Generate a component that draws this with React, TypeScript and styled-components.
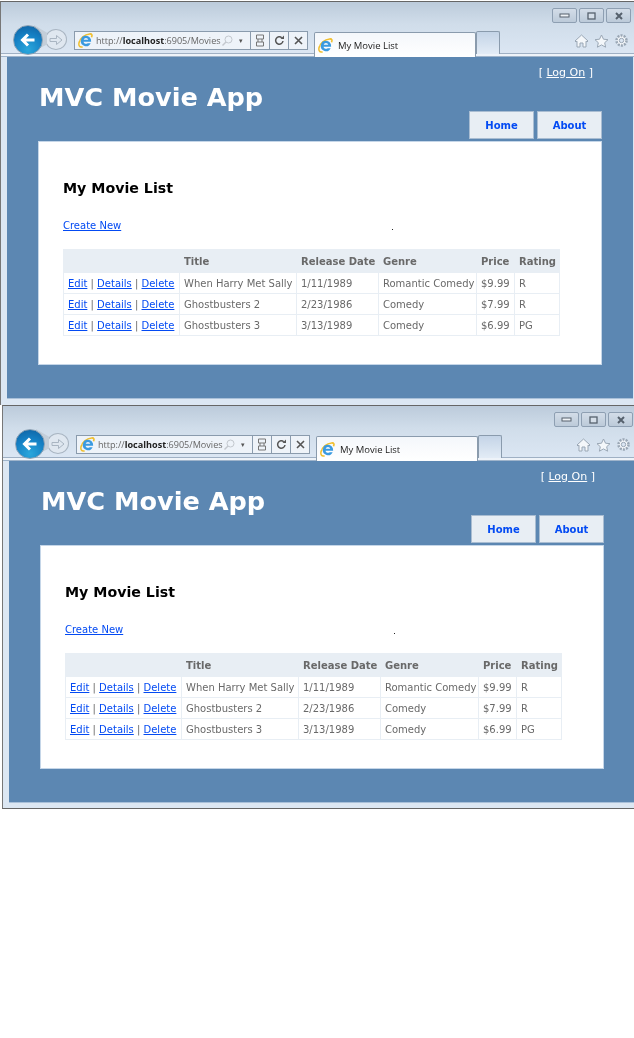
import React from "react";
import styled, { createGlobalStyle } from "styled-components";

const GlobalStyle = createGlobalStyle`
  html, body {
    margin: 0;
    padding: 0;
    background: #fff;
  }
  #root {
    width: 634px;
    height: 1038px;
    overflow: hidden;
  }
`;

const Stack = styled.div`
  display: flex;
  flex-direction: column;
  padding-top: 1px;
`;

const BrowserWindow = styled.div<{ $shift: number }>`
  width: 650px;
  height: 404px;
  margin-left: ${({ $shift }) => $shift}px;
  box-sizing: border-box;
  border-top: 1px solid #666;
  border-left: 1px solid #777;
  background: #dce7f3;
  padding-left: 6px;
  display: flex;
  flex-direction: column;
  overflow: hidden;
  filter: blur(0.4px);

  &:last-child {
    border-bottom: 1px solid #666;
  }
`;

const Chrome = styled.div`
  height: 55px;
  flex: none;
  margin-left: -6px;
  padding-left: 12px;
  background: linear-gradient(
    #bccbdb 0,
    #d0ddea 22px,
    #dbe6f3 51px,
    #9fb0c4 51px,
    #9fb0c4 52px,
    #eef3f9 52px
  );
  border-bottom: 1px solid #9fb4cb;
  box-sizing: border-box;
  display: flex;
  flex-direction: column;
`;

const TitleBar = styled.div`
  height: 21px;
  margin-bottom: 2px;
  flex: none;
  width: 618px;
  display: flex;
  justify-content: flex-end;
  align-items: flex-end;
  gap: 2px;
`;

const WinBtn = styled.div`
  width: 25px;
  height: 15px;
  box-sizing: border-box;
  border: 1px solid #8e9fb2;
  border-radius: 2px;
  background: linear-gradient(#d3dde8, #bccad9);
  display: flex;
  align-items: center;
  justify-content: center;
`;

const NavBar = styled.div`
  display: flex;
  align-items: flex-end;
  height: 31px;
`;

const BackBtn = styled.div`
  width: 30px;
  height: 30px;
  border-radius: 50%;
  background: radial-gradient(circle at 50% 85%, #2aa7dc 0, #1580c4 55%, #0f5f9f 100%);
  border: 1px solid #8da2b5;
  box-sizing: border-box;
  display: flex;
  align-items: center;
  justify-content: center;
  flex: none;
  margin-right: 2px;
  margin-bottom: 1px;
  position: relative;
  z-index: 1;
`;

const ForwardBtn = styled.div`
  width: 22px;
  height: 21px;
  border-radius: 50%;
  border: 1px solid #a9b5c2;
  box-sizing: border-box;
  background: #dfe7f0;
  display: flex;
  align-items: center;
  justify-content: center;
  flex: none;
  margin-bottom: 6px;
  margin-right: 7px;
  position: relative;

  &::before {
    content: "";
    position: absolute;
    left: -12px;
    top: -5px;
    width: 13px;
    height: 26px;
    background: #c3ced9;
    clip-path: polygon(0 0, 100% 30%, 100% 75%, 0 100%);
    z-index: 0;
  }
`;

const AddressBar = styled.div`
  width: 234px;
  height: 19px;
  margin-bottom: 6px;
  box-sizing: border-box;
  border: 1px solid #8a9bad;
  background: #eef3f9;
  display: flex;
  flex: none;
  align-items: center;
  padding-left: 3px;
`;

const UrlText = styled.div`
  font-family: "Open Sans", "Liberation Sans", sans-serif;
  font-size: 9.1px;
  color: #666;
  margin-left: 3px;
  width: 124px;
  white-space: nowrap;
  flex: none;

  b {
    color: #222;
  }
`;

const BarGap = styled.div`
  flex: 1;
  display: flex;
  align-items: center;
  padding-left: 1px;
  gap: 6px;
  color: #555;
  font-size: 7px;
  font-family: "DejaVu Sans", sans-serif;
`;

const BarBtn = styled.div`
  width: 19px;
  height: 17px;
  box-sizing: border-box;
  border-left: 1px solid #8a9bad;
  display: flex;
  align-items: center;
  justify-content: center;
  flex: none;
`;

const Tab = styled.div`
  width: 162px;
  height: 25px;
  margin-left: 6px;
  box-sizing: border-box;
  border: 1px solid #8a9bad;
  border-bottom: none;
  border-radius: 2px 2px 0 0;
  background: linear-gradient(#f4f7fb, #fff);
  display: flex;
  align-items: center;
  padding-left: 3px;
  flex: none;
  margin-bottom: -1px;
`;

const TabTitle = styled.span`
  font-family: "Open Sans", "Liberation Sans", sans-serif;
  font-size: 9.5px;
  color: #222;
  margin-left: 5px;
`;

const NewTab = styled.div`
  width: 24px;
  height: 23px;
  box-sizing: border-box;
  border: 1px solid #8a9bad;
  border-bottom: none;
  border-radius: 2px 2px 0 0;
  background: linear-gradient(#c4d4e7, #e3ecf6);
  flex: none;
  margin-bottom: 2px;
`;

const ToolIcons = styled.div`
  display: flex;
  gap: 5px;
  margin-left: 74px;
  margin-bottom: 8px;
  align-items: center;
`;

const Page = styled.div`
  width: 626px;
  height: 342px;
  flex: none;
  background: #5c87b2;
  border-bottom: 1px solid #a9c0d9;
  padding: 0 0 0 31px;
  box-sizing: border-box;
  display: flex;
  flex-direction: column;
`;

const PageWrap = styled.div`
  width: 564px;
  display: flex;
  flex-direction: column;
`;

const Header = styled.div`
  height: 84px;
  flex: none;
  position: relative;
  display: flex;
  justify-content: space-between;
`;

const AppTitle = styled.h1`
  margin: 25px 0 0 1px;
  font-family: "DejaVu Sans", sans-serif;
  font-size: 25.6px;
  line-height: 30px;
  font-weight: 700;
  color: #fff;
`;

const LogOn = styled.div`
  margin: 9px 9px 0 0;
  font-family: "DejaVu Sans", sans-serif;
  font-size: 11px;
  line-height: 14px;
  color: #fff;

  a {
    color: #fff;
    text-decoration: underline;
  }
`;

const Menu = styled.div`
  position: absolute;
  right: 0;
  bottom: 2px;
  display: flex;
  gap: 3px;
`;

const MenuItem = styled.a`
  width: 65px;
  height: 28px;
  box-sizing: border-box;
  background: #e8eef4;
  border: 1px solid #a9bdd2;
  color: #034af3;
  font-family: "DejaVu Sans", sans-serif;
  font-size: 10px;
  font-weight: 700;
  display: flex;
  align-items: center;
  justify-content: center;
`;

const Main = styled.div`
  background: #fff;
  border: 1px solid #c5d6e8;
  height: 224px;
  box-sizing: border-box;
  padding: 0 0 0 24px;
  font-family: "DejaVu Sans", sans-serif;
  position: relative;
`;

const Heading = styled.h2`
  margin: 37px 0 0 0;
  font-size: 14.2px;
  line-height: 18px;
  font-weight: 700;
  color: #000;
`;

const CreateLink = styled.a`
  display: block;
  margin-top: 22px;
  margin-bottom: 16px;
  font-size: 10px;
  line-height: 14px;
  color: #034af3;
  text-decoration: underline;
`;

const Speck = styled.div`
  position: absolute;
  left: 353px;
  top: 87px;
  width: 1px;
  height: 1px;
  background: #222;
`;

const Table = styled.table`
  border-collapse: collapse;
  table-layout: fixed;
  width: 496px;
  font-size: 10px;
  color: #696969;
  line-height: 14px;

  th {
    background: #e8eef4;
    border: 1px solid #e8eef4;
    padding: 1px 0 0 4px;
    height: 21px;
    text-align: left;
    font-weight: 700;
    white-space: nowrap;
  }

  td {
    border: 1px solid #e8eef4;
    padding: 1px 0 0 4px;
    height: 19px;
    white-space: nowrap;
  }

  a {
    color: #034af3;
    text-decoration: underline;
  }
`;

const Col = styled.col<{ $w: number }>`
  width: ${({ $w }) => $w}px;
`;

const colWidths = [116, 117, 82, 98, 38, 45];

const movies = [
  ["When Harry Met Sally", "1/11/1989", "Romantic Comedy", "$9.99", "R"],
  ["Ghostbusters 2", "2/23/1986", "Comedy", "$7.99", "R"],
  ["Ghostbusters 3", "3/13/1989", "Comedy", "$6.99", "PG"],
];

const IeLogo = () => (
  <svg width="15" height="15" viewBox="0 0 16 16">
    <path d="M1.500 10C2 5.500 7 1.500 12.500 1c2.500-.2 3 1.500 1.800 3.500" fill="none" stroke="#f0bf2e" strokeWidth="1.700" />
    <path d="M8.500 3a5.500 5.500 0 1 0 5 7.800h-3.200a2.600 2.600 0 0 1-4.400-1.600H14A5.500 5.500 0 0 0 8.500 3zM6 7.200a2.600 2.600 0 0 1 5 0z" fill="#3a9ae0" />
    <path d="M1.500 9c-1.500 4 0 6.800 3.500 5.800" fill="none" stroke="#f0bf2e" strokeWidth="1.600" />
  </svg>
);

const BackArrow = () => (
  <svg width="16" height="14" viewBox="0 0 16 14">
    <path d="M14.500 7H3M8 1.500 2.500 7 8 12.500" fill="none" stroke="#fff" strokeWidth="3" />
  </svg>
);

const ForwardArrow = () => (
  <svg width="14" height="12" viewBox="0 0 14 12">
    <path d="M1 4.500h6.500V1.500L13 6l-5.500 4.500v-3H1z" fill="none" stroke="#a9b5c2" strokeWidth="1" />
  </svg>
);

const Search = () => (
  <svg width="12" height="12" viewBox="0 0 12 12">
    <circle cx="7.500" cy="4.500" r="3.500" fill="none" stroke="#c3c8ce" strokeWidth="1" />
    <path d="M5 7 1.500 10.500" stroke="#c3c8ce" strokeWidth="1.500" />
  </svg>
);

const Compat = () => (
  <svg width="10" height="13" viewBox="0 0 10 13">
    <path d="M1.500 1h7v4h-7zM1.500 8h7v4h-7zM3 5v3M7 5v3" fill="none" stroke="#777" strokeWidth="1" />
  </svg>
);

const Refresh = () => (
  <svg width="11" height="11" viewBox="0 0 11 11">
    <path d="M9 6a3.700 3.700 0 1 1-1.200-3.300" fill="none" stroke="#555" strokeWidth="1.500" />
    <path d="M6.500 4H10V.5z" fill="#555" />
  </svg>
);

const Close = () => (
  <svg width="9" height="9" viewBox="0 0 9 9">
    <path d="M1 1l7 7M8 1 1 8" stroke="#555" strokeWidth="1.600" />
  </svg>
);

const Home = () => (
  <svg width="15" height="14" viewBox="0 0 15 14">
    <path d="M7.500 1 1 7l1 1 1-.8V13h3V9h3v4h3V7.200l1 .8 1-1z" fill="#f4f7fa" stroke="#9aa7b5" strokeWidth="1" />
  </svg>
);

const Star = () => (
  <svg width="15" height="14" viewBox="0 0 15 14">
    <path d="M7.500 1l2 4.200 4.500.5-3.300 3 .9 4.500-4.100-2.300-4.100 2.300.9-4.500-3.300-3 4.500-.5z" fill="#f4f7fa" stroke="#9aa7b5" strokeWidth="1" />
  </svg>
);

const Gear = () => (
  <svg width="15" height="15" viewBox="0 0 15 15">
    <circle cx="7.500" cy="7.500" r="5" fill="#f4f7fa" stroke="#9aa7b5" strokeWidth="2.500" strokeDasharray="2 1.140" />
    <circle cx="7.500" cy="7.500" r="2.200" fill="#dbe6f3" stroke="#9aa7b5" strokeWidth="1" />
  </svg>
);

const Window = ({ shift }: { shift: number }) => (
  <BrowserWindow $shift={shift}>
    <Chrome>
      <TitleBar>
        <WinBtn>
          <svg width="11" height="5" viewBox="0 0 11 5">
            <rect x="1" y="1" width="9" height="3" fill="#eef2f6" stroke="#56616d" />
          </svg>
        </WinBtn>
        <WinBtn>
          <svg width="9" height="8" viewBox="0 0 9 8">
            <rect x="1" y="1" width="7" height="6" fill="#d5dee8" stroke="#56616d" strokeWidth="1.300" />
          </svg>
        </WinBtn>
        <WinBtn>
          <svg width="10" height="8" viewBox="0 0 10 8">
            <path d="M2 1l6 6M8 1 2 7" stroke="#56616d" strokeWidth="2" />
          </svg>
        </WinBtn>
      </TitleBar>
      <NavBar>
        <BackBtn>
          <BackArrow />
        </BackBtn>
        <ForwardBtn>
          <ForwardArrow />
        </ForwardBtn>
        <AddressBar>
          <IeLogo />
          <UrlText>
            http://<b>localhost</b>:6905/Movies
          </UrlText>
          <BarGap>
            <Search />▾
          </BarGap>
          <BarBtn>
            <Compat />
          </BarBtn>
          <BarBtn>
            <Refresh />
          </BarBtn>
          <BarBtn>
            <Close />
          </BarBtn>
        </AddressBar>
        <Tab>
          <IeLogo />
          <TabTitle>My Movie List</TabTitle>
        </Tab>
        <NewTab />
        <ToolIcons>
          <Home />
          <Star />
          <Gear />
        </ToolIcons>
      </NavBar>
    </Chrome>
    <Page>
      <PageWrap>
        <Header>
          <AppTitle>MVC Movie App</AppTitle>
          <LogOn>
            [ <a>Log On</a> ]
          </LogOn>
          <Menu>
            <MenuItem>Home</MenuItem>
            <MenuItem>About</MenuItem>
          </Menu>
        </Header>
        <Main>
          <Speck />
          <Heading>My Movie List</Heading>
          <CreateLink>Create New</CreateLink>
          <Table>
            <colgroup>
              {colWidths.map((w, i) => (
                <Col key={i} $w={w} />
              ))}
            </colgroup>
            <thead>
              <tr>
                <th></th>
                <th>Title</th>
                <th>Release Date</th>
                <th>Genre</th>
                <th>Price</th>
                <th>Rating</th>
              </tr>
            </thead>
            <tbody>
              {movies.map((m) => (
                <tr key={m[0]}>
                  <td>
                    <a>Edit</a> | <a>Details</a> | <a>Delete</a>
                  </td>
                  {m.map((v, i) => (
                    <td key={i}>{v}</td>
                  ))}
                </tr>
              ))}
            </tbody>
          </Table>
        </Main>
      </PageWrap>
    </Page>
  </BrowserWindow>
);

export default function App() {
  return (
    <>
      <GlobalStyle />
      <Stack>
        <Window shift={0} />
        <Window shift={2} />
      </Stack>
    </>
  );
}
